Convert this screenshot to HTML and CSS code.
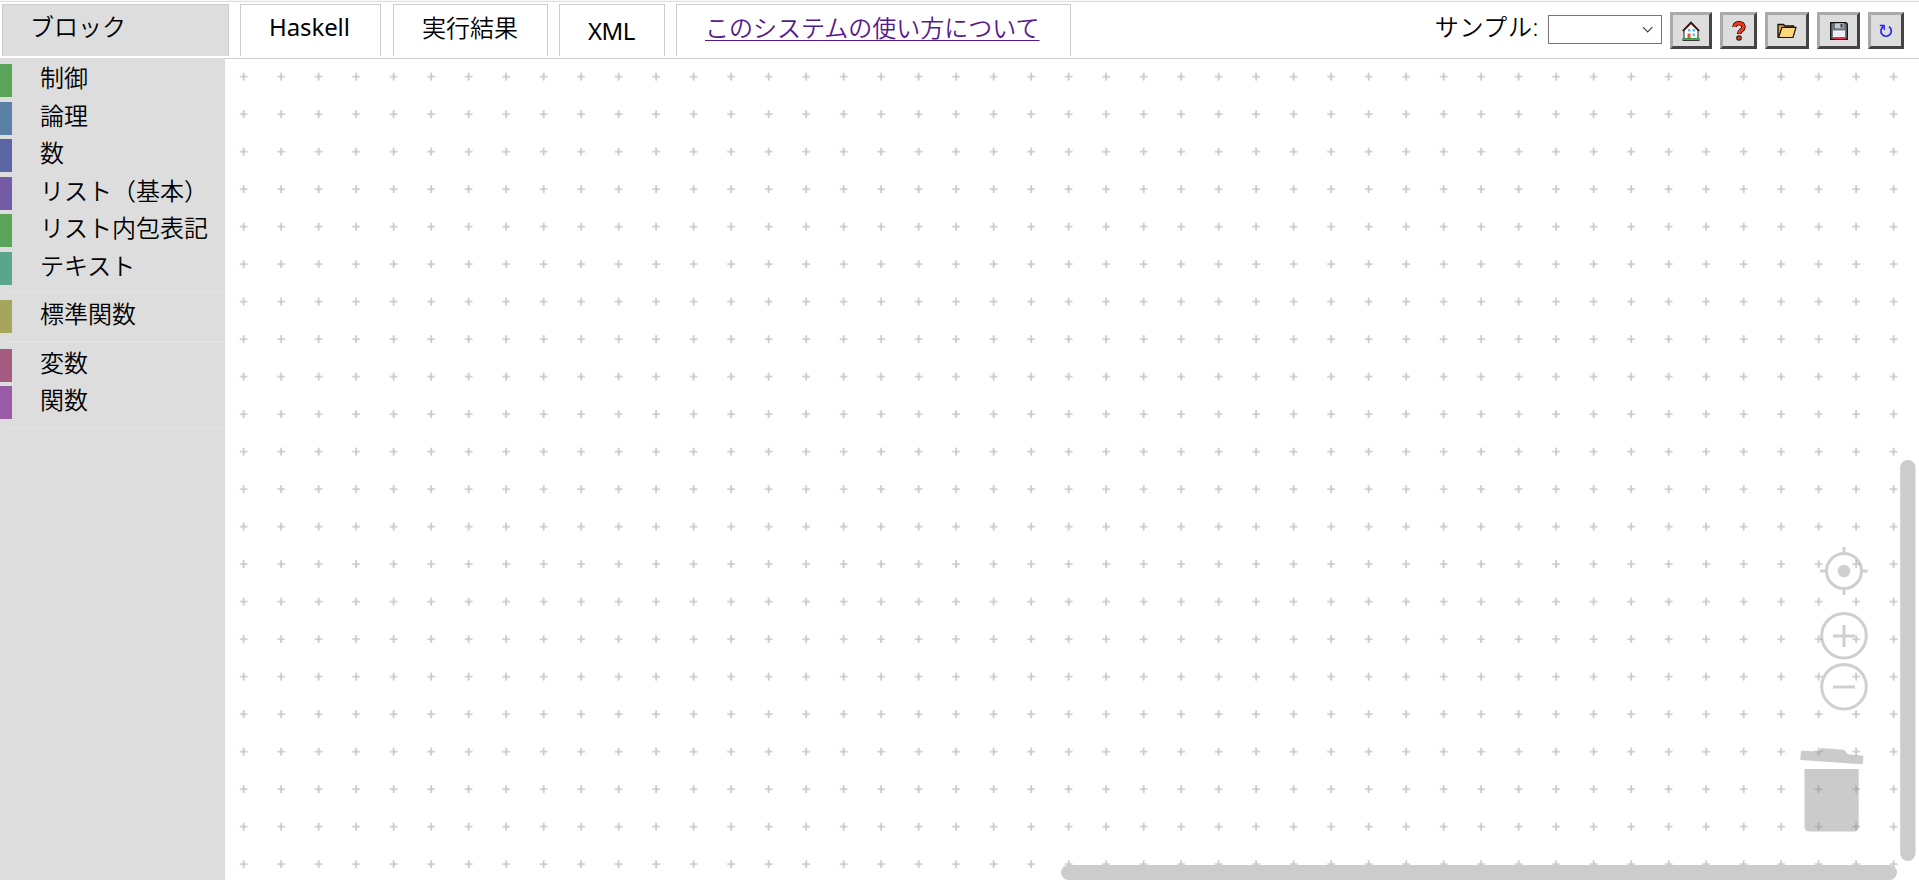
FILE: index.html
```html
<!DOCTYPE html>
<html lang="ja">
<head>
<meta charset="utf-8">
<title>ブロック</title>
<link rel="stylesheet" href="styles.css">
</head>
<body>
<header class="topbar">
  <nav class="tabs">
    <div class="tab tab-blocks active">ブロック</div>
    <div class="tab tab-haskell">Haskell</div>
    <div class="tab tab-result">実行結果</div>
    <div class="tab tab-xml">XML</div>
    <div class="tab tab-help"><a href="#">このシステムの使い方について</a></div>
  </nav>
  <div class="tools">
    <span class="label">サンプル:</span>
    <div class="select"><svg width="12" height="8" viewBox="0 0 12 8"><path d="M1 1.2 5.7 6 10.4 1.2" fill="none" stroke="#444" stroke-width="1.2"/></svg></div>
    <button class="btn btn-home"><svg width="18" height="20" viewBox="0 0 18 20"><path d="M2 9.500 9 2.500l7 7V18H2z" fill="#fff" stroke="#222" stroke-width="1"/><path d="M.8 10 9 1.500 17.200 10" fill="none" stroke="#111" stroke-width="1.800"/><path d="M2.500 9.200 9 2.700l6.500 6.500" fill="none" stroke="#e02010" stroke-width="1"/><path d="M6 8h2.500v2.500H6zM10.500 8H13v2.500h-2.500zM10.500 12.500H13V15h-2.500z" fill="#4cc2ee"/><path d="M5.500 12.500h3V18h-3z" fill="#e8552d"/><path d="M.5 18.700h17" stroke="#111" stroke-width="2.200"/><path d="M1 18.200h16" stroke="#16c83c" stroke-width="1.600"/></svg></button>
    <button class="btn btn-question"><svg width="14" height="20" viewBox="0 0 14 20"><path d="M2.500 6C2.500 1 11.500 1 11.500 6c0 3.500-4.500 3.500-4.500 7" fill="none" stroke="#111" stroke-width="4.600"/><circle cx="7" cy="17" r="2.800" fill="#111"/><path d="M2.500 6C2.500 1 11.500 1 11.500 6c0 3.500-4.500 3.500-4.500 6.500" fill="none" stroke="#f03a17" stroke-width="3"/><circle cx="7" cy="17" r="1.800" fill="#f03a17"/></svg></button>
    <button class="btn btn-open"><svg width="20" height="16" viewBox="0 0 20 16"><path d="M1 14.500V1.500h5.500l1.500 1.500h8.500v2" fill="#e9a23b" stroke="#111" stroke-width="1.300"/><path d="M1.500 14.500 5 4.300h14l-3 10.200z" fill="#ffd679" stroke="#111" stroke-width="1.200"/></svg></button>
    <button class="btn btn-save"><svg width="18" height="18" viewBox="0 0 18 18"><path d="M.7.700H16l1.300 1.300v15.300H.7z" fill="#6b7580" stroke="#111" stroke-width="1.300"/><path d="M5 1.300h8.500v5H5z" fill="#c8c8c8"/><path d="M10.500 2h2v3.500h-2z" fill="#333"/><path d="M3 8.500h12V15H3z" fill="#f4f4f4"/><path d="M3 11h12M3 13h12" stroke="#ddd" stroke-width=".7"/><path d="M3 15.300h12v1.700H3z" fill="#f0205a"/></svg></button>
    <button class="btn btn-reload"><svg width="14" height="16" viewBox="0 0 14 16"><path d="M4.500 3.500A5.200 5.200 0 1 0 10 3.700" fill="none" stroke="#1a1aff" stroke-width="1.600"/><path d="M.8 2.500h4.400v4.500" fill="none" stroke="#1a1aff" stroke-width="1.300"/></svg></button>
  </div>
</header>
<main class="workspace">
  <aside class="toolbox">
    <div class="cat green">制御</div>
    <div class="cat blue">論理</div>
    <div class="cat indigo">数</div>
    <div class="cat violet">リスト（基本）</div>
    <div class="cat green">リスト内包表記</div>
    <div class="cat teal">テキスト</div>
    <div class="sep"></div>
    <div class="cat olive">標準関数</div>
    <div class="sep"></div>
    <div class="cat rose">変数</div>
    <div class="cat purple">関数</div>
    <div class="sep"></div>
  </aside>
  <svg class="canvas" width="1694" height="821" viewBox="225 59 1694 821">
    <defs>
      <pattern id="grid" x="224.900" y="57.900" width="37.500" height="37.500" patternUnits="userSpaceOnUse">
        <path d="M14.850 18.750h7.800M18.750 14.850v7.800" stroke="#c8c8c8" stroke-width="1.700"/>
      </pattern>
    </defs>
    <rect x="225" y="59" width="1694" height="821" fill="url(#grid)"/>
    <g fill="none" stroke="#888" stroke-opacity=".4" stroke-width="3">
      <circle cx="1844" cy="571" r="17.500"/>
      <path d="M1844 547v5M1844 590v5M1820 571h5M1863 571h4.500"/>
      <circle cx="1844" cy="571" r="6.300" fill="#888" fill-opacity=".4" stroke="none"/>
      <circle cx="1844" cy="635.700" r="22.300"/>
      <path d="M1833 636h22M1844 625v9.500M1844 637.500v9.500"/>
      <circle cx="1844" cy="686.700" r="22.300"/>
      <path d="M1833 687h22"/>
    </g>
    <g fill="#888" fill-opacity=".44">
      <path d="M1804.500 769h54.200v57.500q0 5-5 5h-44.200q-5 0-5-5z"/>
      <path d="M1801 750.800 1819 751.500 1821 748 1844 749.700 1848 754.300 1863.500 755.800 1862.700 764.300 1800.300 760z"/>
    </g>
    <g fill="#ccc">
      <rect x="1900.200" y="460" width="15.300" height="401" rx="7.600"/>
      <rect x="1061" y="865" width="836" height="15" rx="7.500"/>
    </g>
  </svg>
</main>
</body>
</html>
```
FILE: styles.css
```css
* { box-sizing: border-box; }
body {
  margin: 0;
  height: 880px;
  overflow: hidden;
  background: #fff;
  color: #000;
  font: 350 24px/36px "Noto Sans", "Noto Sans CJK JP", sans-serif;
}
.topbar {
  display: flex;
  justify-content: space-between;
  height: 59px;
  padding: 2px 15px 0 2px;
  border-top: 1px solid #f8f8f8;
  border-bottom: 1px solid #ccc;
  box-shadow: inset 0 1px #ddd;
}
.tabs { display: flex; padding-top: 1px; }
.tab {
  height: 52px;
  padding: 5px 0 0 28px;
  border: 1px solid #ccc;
  border-bottom: 0;
  white-space: nowrap;
}
.tab.active { background: #ddd; }
.tab-blocks { width: 227px; margin-right: 11px; padding: 4px 0 0 27px; }
.tab-haskell { width: 141px; margin-right: 12px; padding-top: 4px; font-weight: 400; letter-spacing: -.1px; }
.tab-result { width: 155px; margin-right: 11px; }
.tab-xml { width: 106px; margin-right: 11px; padding-top: 8px; font-weight: 400; letter-spacing: -.5px; }
.tab-help { width: 395px; }
.tab a { color: #551a8b; text-decoration-thickness: 1px; text-underline-offset: 3px; }
.tools { display: flex; align-items: flex-start; padding-top: 9px; }
.label { margin: -3px 9px 0 0; letter-spacing: .6px; white-space: nowrap; }
.select {
  display: flex;
  align-items: center;
  justify-content: flex-end;
  width: 114px;
  height: 29px;
  margin: 3px 8px 0 0;
  padding-right: 7px;
  border: 1px solid #767676;
}
.btn {
  display: flex;
  align-items: center;
  justify-content: center;
  height: 37px;
  margin: 0 8px 0 0;
  padding: 0;
  background: #ddd;
  border: 3px solid;
  border-color: #aaa #444 #444 #aaa;
}
.btn-home { width: 42px; }
.btn-question { width: 37px; }
.btn-open { width: 44px; }
.btn-save { width: 43px; }
.btn-reload { width: 36px; margin-right: 0; }
.workspace { display: flex; height: 821px; }
.toolbox {
  display: flex;
  flex-direction: column;
  width: 225px;
  padding-top: 5px;
  background: #ddd;
  box-shadow: 0 -1px #ddd;
}
.canvas { display: block; }
.cat {
  height: 33px;
  margin-bottom: 4.5px;
  padding-left: 28px;
  border-left: 12px solid var(--hue);
  line-height: 28px;
  white-space: nowrap;
}
.green { --hue: #5ba55b; }
.blue { --hue: #5b80a5; }
.indigo { --hue: #5b67a5; }
.violet { --hue: #745ba5; }
.teal { --hue: #5ba58c; }
.olive { --hue: #a5a55b; }
.rose { --hue: #a55b80; }
.purple { --hue: #995ba5; }
.sep {
  height: 1px;
  margin: 3px 0 7px 8px;
  background: #e5e5e5;
}
```
